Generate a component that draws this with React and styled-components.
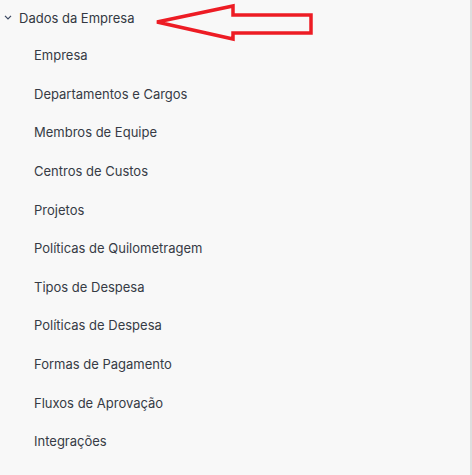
import React from "react";
import styled, { createGlobalStyle } from "styled-components";

const GlobalStyle = createGlobalStyle`
  html, body {
    margin: 0;
    padding: 0;
    background: #f8f8f8;
  }
  body {
    font-family: Inter, "Noto Sans", sans-serif;
  }
`;

const items = [
  "Empresa",
  "Departamentos e Cargos",
  "Membros de Equipe",
  "Centros de Custos",
  "Projetos",
  "Políticas de Quilometragem",
  "Tipos de Despesa",
  "Políticas de Despesa",
  "Formas de Pagamento",
  "Fluxos de Aprovação",
  "Integrações",
];

function App() {
  return (
    <>
      <GlobalStyle />
      <Sidebar>
        <Group>
          <Header>
            <Chevron viewBox="0 0 10 10">
              <path d="M2.5 4 L5 6.5 L7.5 4" fill="none" stroke="#3a4660" strokeWidth="1" />
            </Chevron>
            <span>Dados da Empresa</span>
          </Header>
          <List>
            {items.map((item) => (
              <Item key={item}>{item}</Item>
            ))}
          </List>
        </Group>
        <Arrow viewBox="0 0 472 50" width="472" height="50">
          <polygon
            points="157,22 233,6 233,15 311,15 311,33 233,33 233,39"
            fill="none"
            stroke="#ed1c24"
            strokeWidth="3.5"
            strokeLinejoin="miter"
          />
        </Arrow>
      </Sidebar>
    </>
  );
}

export default App;

const Sidebar = styled.div`
  position: relative;
  width: 470px;
  height: 475px;
  background: #f8f8f8;
  border-right: 2px solid #dedede;
`;

const Group = styled.div`
  display: flex;
  flex-direction: column;
`;

const Header = styled.div`
  display: flex;
  align-items: center;
  height: 36px;
  padding-left: 2px;
  font-size: 13px;
  color: #333842;
  span {
    margin-left: 5px;
  }
`;

const Chevron = styled.svg`
  width: 12px;
  height: 12px;
  margin-top: -3px;
`;

const List = styled.div`
  display: flex;
  flex-direction: column;
`;

const Item = styled.div`
  height: 38.6px;
  display: flex;
  align-items: center;
  padding-left: 34px;
  font-size: 13px;
  color: #363b45;
`;

const Arrow = styled.svg`
  position: absolute;
  left: 0;
  top: 0;
  pointer-events: none;
`;
